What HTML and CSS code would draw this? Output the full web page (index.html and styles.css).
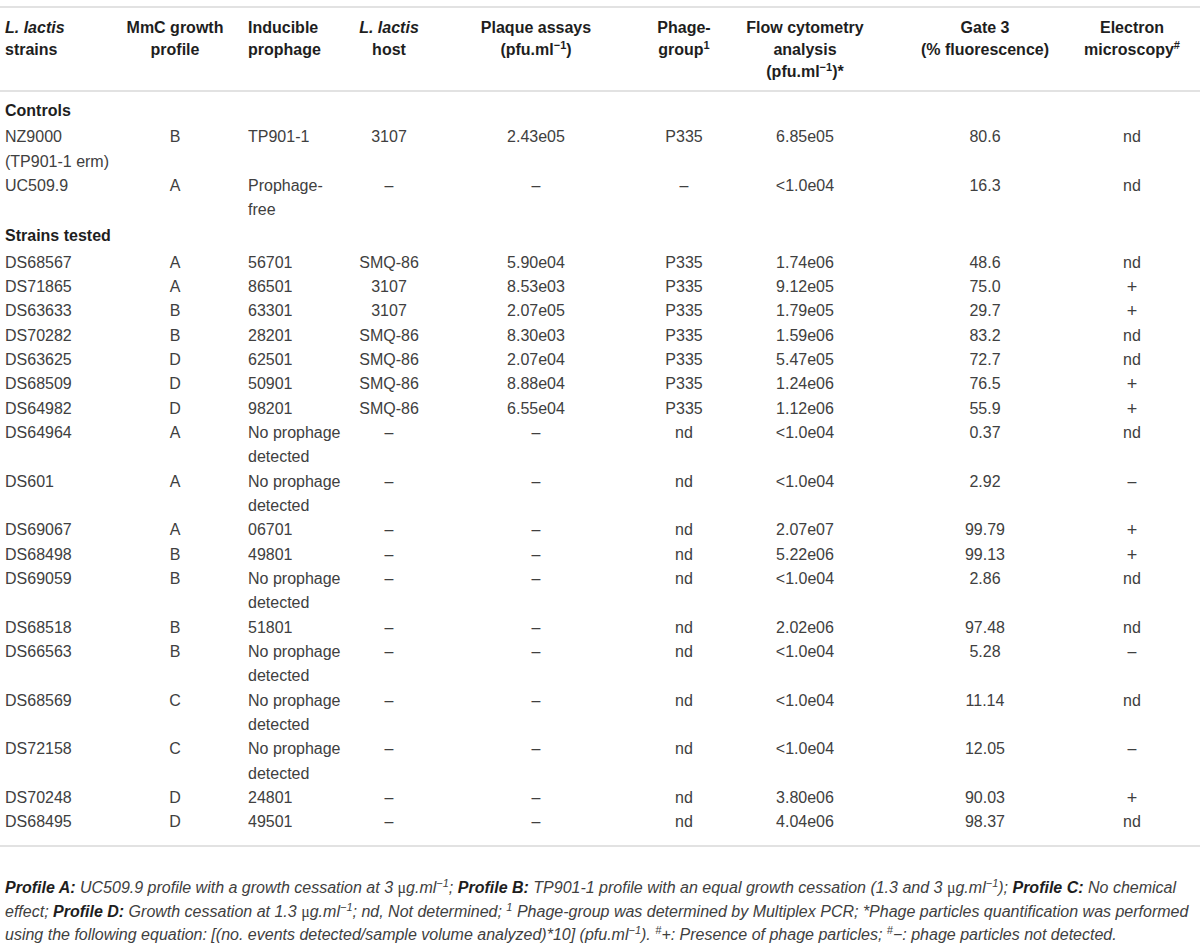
FILE: index.html
```html
<!DOCTYPE html>
<html>
<head>
<meta charset="utf-8">
<link rel="stylesheet" href="styles.css">
</head>
<body>
<div class="page">
<table class="data">
  <colgroup>
    <col class="w1"><col class="w2"><col class="w3"><col class="w4"><col class="w5"><col class="w6"><col class="w7"><col class="w8"><col class="w9">
  </colgroup>
  <thead>
    <tr>
      <th class="left"><i>L. lactis</i><br>strains</th>
      <th>MmC growth<br>profile</th>
      <th class="left ind">Inducible<br>prophage</th>
      <th><i>L. lactis</i><br>host</th>
      <th>Plaque assays<br>(pfu.ml<sup>−1</sup>)</th>
      <th>Phage-<br>group<sup>1</sup></th>
      <th class="c7">Flow cytometry<br>analysis<br>(pfu.ml<sup>−1</sup>)*</th>
      <th>Gate 3<br>(% fluorescence)</th>
      <th>Electron<br>microscopy<sup>#</sup></th>
    </tr>
  </thead>
  <tbody>
    <tr class="section first"><td class="left" colspan="9">Controls</td></tr>
    <tr><td class="left">NZ9000<br>(TP901-1 erm)</td><td>B</td><td class="left ind">TP901-1</td><td>3107</td><td>2.43e05</td><td>P335</td><td class="c7">6.85e05</td><td>80.6</td><td>nd</td></tr>
    <tr><td class="left">UC509.9</td><td>A</td><td class="left ind">Prophage-<br>free</td><td>–</td><td>–</td><td>–</td><td class="c7">&lt;1.0e04</td><td>16.3</td><td>nd</td></tr>
    <tr class="section"><td class="left" colspan="9">Strains tested</td></tr>
    <tr><td class="left">DS68567</td><td>A</td><td class="left ind">56701</td><td>SMQ-86</td><td>5.90e04</td><td>P335</td><td class="c7">1.74e06</td><td>48.6</td><td>nd</td></tr>
    <tr><td class="left">DS71865</td><td>A</td><td class="left ind">86501</td><td>3107</td><td>8.53e03</td><td>P335</td><td class="c7">9.12e05</td><td>75.0</td><td class="plus">+</td></tr>
    <tr><td class="left">DS63633</td><td>B</td><td class="left ind">63301</td><td>3107</td><td>2.07e05</td><td>P335</td><td class="c7">1.79e05</td><td>29.7</td><td class="plus">+</td></tr>
    <tr><td class="left">DS70282</td><td>B</td><td class="left ind">28201</td><td>SMQ-86</td><td>8.30e03</td><td>P335</td><td class="c7">1.59e06</td><td>83.2</td><td>nd</td></tr>
    <tr><td class="left">DS63625</td><td>D</td><td class="left ind">62501</td><td>SMQ-86</td><td>2.07e04</td><td>P335</td><td class="c7">5.47e05</td><td>72.7</td><td>nd</td></tr>
    <tr><td class="left">DS68509</td><td>D</td><td class="left ind">50901</td><td>SMQ-86</td><td>8.88e04</td><td>P335</td><td class="c7">1.24e06</td><td>76.5</td><td class="plus">+</td></tr>
    <tr><td class="left">DS64982</td><td>D</td><td class="left ind">98201</td><td>SMQ-86</td><td>6.55e04</td><td>P335</td><td class="c7">1.12e06</td><td>55.9</td><td class="plus">+</td></tr>
    <tr><td class="left">DS64964</td><td>A</td><td class="left ind">No prophage<br>detected</td><td>–</td><td>–</td><td>nd</td><td class="c7">&lt;1.0e04</td><td>0.37</td><td>nd</td></tr>
    <tr><td class="left">DS601</td><td>A</td><td class="left ind">No prophage<br>detected</td><td>–</td><td>–</td><td>nd</td><td class="c7">&lt;1.0e04</td><td>2.92</td><td>–</td></tr>
    <tr><td class="left">DS69067</td><td>A</td><td class="left ind">06701</td><td>–</td><td>–</td><td>nd</td><td class="c7">2.07e07</td><td>99.79</td><td class="plus">+</td></tr>
    <tr><td class="left">DS68498</td><td>B</td><td class="left ind">49801</td><td>–</td><td>–</td><td>nd</td><td class="c7">5.22e06</td><td>99.13</td><td class="plus">+</td></tr>
    <tr><td class="left">DS69059</td><td>B</td><td class="left ind">No prophage<br>detected</td><td>–</td><td>–</td><td>nd</td><td class="c7">&lt;1.0e04</td><td>2.86</td><td>nd</td></tr>
    <tr><td class="left">DS68518</td><td>B</td><td class="left ind">51801</td><td>–</td><td>–</td><td>nd</td><td class="c7">2.02e06</td><td>97.48</td><td>nd</td></tr>
    <tr><td class="left">DS66563</td><td>B</td><td class="left ind">No prophage<br>detected</td><td>–</td><td>–</td><td>nd</td><td class="c7">&lt;1.0e04</td><td>5.28</td><td>–</td></tr>
    <tr><td class="left">DS68569</td><td>C</td><td class="left ind">No prophage<br>detected</td><td>–</td><td>–</td><td>nd</td><td class="c7">&lt;1.0e04</td><td>11.14</td><td>nd</td></tr>
    <tr><td class="left">DS72158</td><td>C</td><td class="left ind">No prophage<br>detected</td><td>–</td><td>–</td><td>nd</td><td class="c7">&lt;1.0e04</td><td>12.05</td><td>–</td></tr>
    <tr><td class="left">DS70248</td><td>D</td><td class="left ind">24801</td><td>–</td><td>–</td><td>nd</td><td class="c7">3.80e06</td><td>90.03</td><td class="plus">+</td></tr>
    <tr class="last"><td class="left">DS68495</td><td>D</td><td class="left ind">49501</td><td>–</td><td>–</td><td>nd</td><td class="c7">4.04e06</td><td>98.37</td><td>nd</td></tr>
  </tbody>
</table>
<p class="notes"><b>Profile A:</b> UC509.9 profile with a growth cessation at 3 <span class="mu">μ</span>g.ml<sup>−1</sup>; <b>Profile B:</b> TP901-1 profile with an equal growth cessation (1.3 and 3 <span class="mu">μ</span>g.ml<sup>−1</sup>); <b>Profile C:</b> No chemical<br>effect; <b>Profile D:</b> Growth cessation at 1.3 <span class="mu">μ</span>g.ml<sup>−1</sup>; nd, Not determined; <sup>1</sup> Phage-group was determined by Multiplex PCR; *Phage particles quantification was performed<br>using the following equation: [(no. events detected/sample volume analyzed)*10] (pfu.ml<sup>−1</sup>). <sup>#</sup>+: Presence of phage particles; <sup>#</sup>−: phage particles not detected.</p>
</div>
</body>
</html>
```

FILE: styles.css
```css
html, body {
  margin: 0;
  padding: 0;
  background: #ffffff;
}

.page {
  width: 1200px;
  padding-top: 6px;
  font-family: "Liberation Sans", Arial, sans-serif;
  font-size: 16px;
  color: #404040;
}

.data {
  width: 1200px;
  border-collapse: collapse;
  table-layout: fixed;
  border-top: 2px solid #e2e2e2;
  border-bottom: 2px solid #e2e2e2;
}

.w1 { width: 120px; }
.w2 { width: 110px; }
.w3 { width: 110px; }
.w4 { width: 98px; }
.w5 { width: 196px; }
.w6 { width: 100px; }
.w7 { width: 172px; }
.w8 { width: 158px; }
.w9 { width: 136px; }

.data th {
  font-weight: bold;
  color: #1e1e1e;
  line-height: 22px;
  vertical-align: top;
  text-align: center;
  padding: 9px 0 7px 0;
  border-bottom: 2px solid #e2e2e2;
  white-space: nowrap;
}

.data td {
  line-height: 24.35px;
  vertical-align: top;
  text-align: center;
  padding: 0;
  white-space: nowrap;
}

.data .left {
  text-align: left;
  padding-left: 5px;
}

.data .ind {
  padding-left: 18px;
}

.data .c7 {
  padding-right: 30px;
}

.data .plus {
  font-size: 18px;
}

.section td {
  font-weight: bold;
  color: #1e1e1e;
  padding-top: 1.5px;
  padding-bottom: 2px;
}

.section.first td {
  padding-top: 7px;
  padding-bottom: 2px;
}

.last td {
  padding-bottom: 10.5px;
}

sup {
  font-size: 11px;
  line-height: 0;
  vertical-align: 6px;
}

.notes {
  margin: 29px 0 0 0;
  padding: 0 0 0 5px;
  font-style: italic;
  line-height: 23.5px;
  color: #404040;
  white-space: nowrap;
}

.notes b {
  color: #1e1e1e;
}

.mu {
  font-style: normal;
  font-family: "Liberation Serif", serif;
}
```
